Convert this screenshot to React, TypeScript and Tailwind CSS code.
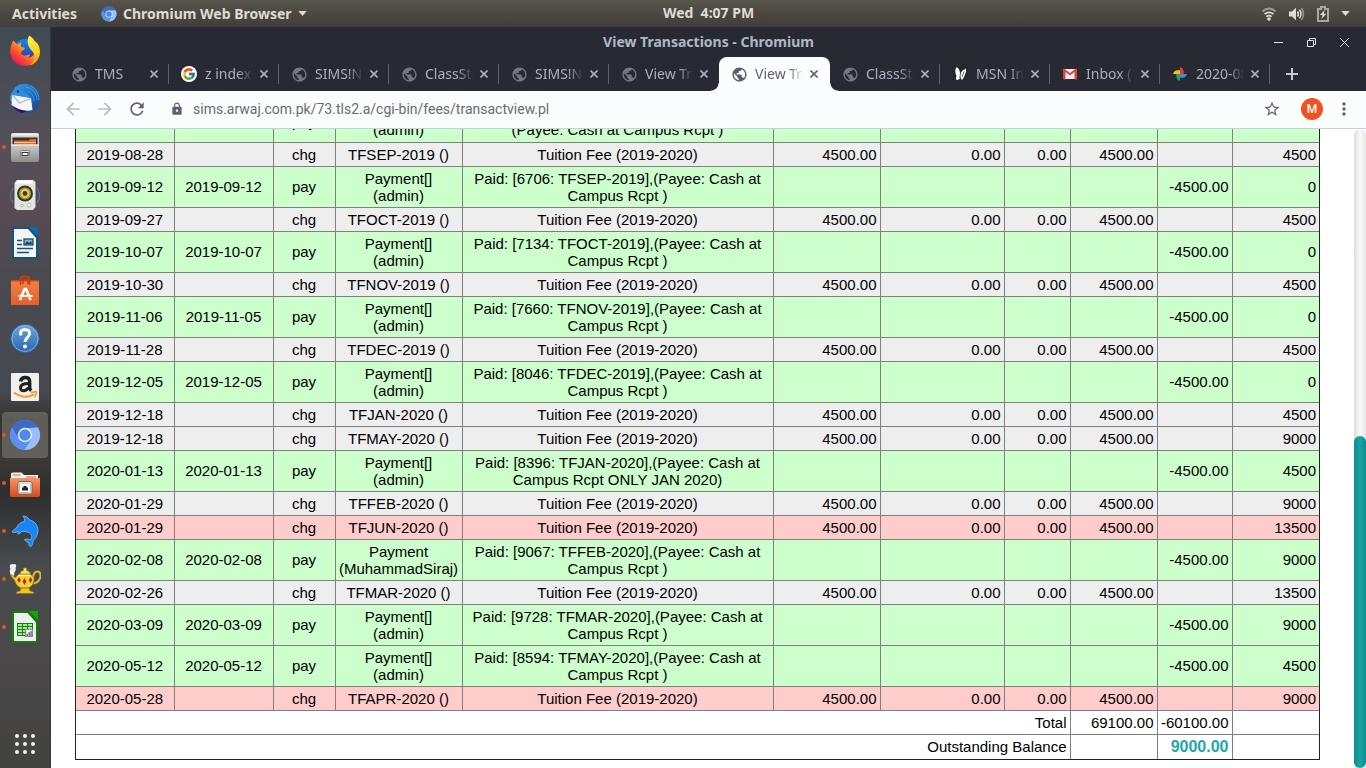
import type { ReactNode } from 'react'
import { FcGoogle } from 'react-icons/fc'
import {
  MdArrowBack,
  MdArrowForward,
  MdLock,
  MdMoreVert,
  MdPublic,
  MdRefresh,
  MdStarBorder,
} from 'react-icons/md'

/* ---------- Dock icons ---------- */

function FirefoxIcon() {
  return (
    <svg viewBox="0 0 32 32" className="size-8">
      <defs>
        <linearGradient id="ff-body" x1="0.9" y1="0.1" x2="0.2" y2="0.9">
          <stop offset="0" stopColor="#ffe226" />
          <stop offset="0.4" stopColor="#ff9a1c" />
          <stop offset="0.7" stopColor="#ff4a36" />
          <stop offset="1" stopColor="#e8145c" />
        </linearGradient>
        <linearGradient id="ff-globe" x1="0.5" y1="0" x2="0.5" y2="1">
          <stop offset="0" stopColor="#0a8cf5" />
          <stop offset="1" stopColor="#3a2a9a" />
        </linearGradient>
        <linearGradient id="ff-tail" x1="0.3" y1="0" x2="0.5" y2="1">
          <stop offset="0" stopColor="#fff04a" />
          <stop offset="0.6" stopColor="#ffd21c" />
          <stop offset="1" stopColor="#ff8a16" />
        </linearGradient>
      </defs>
      <circle cx="16" cy="16" r="12" fill="url(#ff-globe)" />
      <path d="M4.500 5.500 8 9.500c2-1.500 4-2 5-1.800-1.500 1.500-1.500 3-.5 4.300 2 .3 3.500.5 3.300 1.500-.4 1.500-3 2-3.600 3.500-.5 2 1.500 3.800 4 3.500 2-.3 3-1.500 4.800-1 .6.800-1 2.800-3 3.300 5 .5 9-4 8.500-9 1.500 1.500 2 3.700 2 5C30 26 23.500 31 16.200 31 8 31 1.200 25 1.200 16.500 1.200 11.500 2.800 7.500 4.500 5.500Z" fill="url(#ff-body)" />
      <path d="M20 .5c3.500 2 5 4 5.800 5.800C29.500 8.500 31 13 31 17c0 7-5 12-10 13.400 3.300-2.600 5.500-6.400 4.500-10.400-1-3.800-4.500-5.500-6-9C18 7.500 18.500 3.500 20 .5Z" fill="url(#ff-tail)" />
    </svg>
  )
}

function ThunderbirdIcon() {
  return (
    <svg viewBox="0 0 32 32" className="size-8">
      <defs>
        <linearGradient id="tb-body" x1="0" y1="0" x2="1" y2="1">
          <stop offset="0" stopColor="#3fa2e8" />
          <stop offset="0.5" stopColor="#2470c4" />
          <stop offset="1" stopColor="#18408c" />
        </linearGradient>
      </defs>
      <path d="M8 3c5-3.500 13-3 18 1.500 6 5.500 6.500 15 2 20.500-3 4-8 5.500-12 5C7 29.500 1 24 1 16 1 12 2.500 9 5 7c.3-2 1.500-3 3-4Z" fill="url(#tb-body)" />
      <path d="M17 4c6 1 11 6 11 13M19 8c4 2 6 6 6 10M22 3c5 3 8 8 8 14" fill="none" stroke="#5cb3ee" strokeWidth="1" opacity=".6" />
      <path d="M1.500 18c1 6 6 11 12 12l9-4-10 1Z" fill="#27195c" />
      <path d="M3 11.500 22 15l1.500 12c-6 1.500-14 .5-21-5Z" fill="#f3f5f8" />
      <path d="m3.500 12 7 8L22 15.500" fill="none" stroke="#b3bcc8" strokeWidth="1.200" />
      <path d="M5 8c3-3 7-2 10 1 3 2 6 3 7 6L3 12Z" fill="#348ddc" />
      <circle cx="9" cy="8.500" r="1.200" fill="#16396e" />
    </svg>
  )
}

function FilesIcon() {
  return (
    <svg viewBox="0 0 32 32" className="size-8">
      <defs>
        <linearGradient id="cab" x1="0" y1="0" x2="0" y2="1">
          <stop offset="0" stopColor="#d6d5d3" />
          <stop offset="0.5" stopColor="#c3c2c0" />
          <stop offset="1" stopColor="#8e8d8b" />
        </linearGradient>
      </defs>
      <rect x="2" y="2" width="28" height="29" rx="2" fill="url(#cab)" />
      <path d="M2.500 4.500c0-1.500.6-2 2-2h23c1.400 0 2 .5 2 2Z" fill="#efeeed" />
      <rect x="3.500" y="6.500" width="25" height="7.500" fill="#33302e" />
      <path d="M5 9.500h15l1-1.500h6v6H5Z" fill="#e8692c" />
      <path d="M5 11.500h22" stroke="#ffc79c" />
      <path d="M2 14h28" stroke="#efefee" strokeWidth="1.400" />
      <rect x="11.500" y="19.500" width="9" height="6.500" rx="1" fill="#dedddc" stroke="#858483" />
      <rect x="13" y="21.500" width="6" height="3" fill="#fff" stroke="#333" />
    </svg>
  )
}

function RhythmboxIcon() {
  return (
    <svg viewBox="0 0 32 32" className="size-8">
      <path d="M4 9q-5 8 0 15M28 9q5 8 0 15" fill="none" stroke="#5c87bd" strokeWidth="1.300" opacity=".6" />
      <path d="M8 1h16l2.500 2V28L24 31H8l-2.500-2V4Z" fill="#e4e4e1" />
      <path d="M8 1.500h16v3H6Z" fill="#fff" />
      <circle cx="16" cy="14.500" r="8" fill="#343432" />
      <circle cx="16" cy="14.500" r="6" fill="#ad9920" />
      <circle cx="16" cy="14.500" r="4.500" fill="#dfcc50" />
      <circle cx="16" cy="14.500" r="2.400" fill="#41413a" />
      <circle cx="13" cy="26.500" r="1.300" fill="#fff" stroke="#b2b2ae" />
      <circle cx="20" cy="26" r="2" fill="#fff" stroke="#b2b2ae" />
    </svg>
  )
}

function WriterIcon() {
  return (
    <svg viewBox="0 0 32 32" className="size-8">
      <path d="M3 0h17l9 9v23H3Z" fill="#0f5686" />
      <path d="M5 2h14l8 9v19H5Z" fill="#f4f5f5" />
      <path d="M20 0h9v9Z" fill="#0d6ca8" />
      <path d="M8 13.500h5M8 17.500h5M8 21.500h16M8 25.500h12" stroke="#0f5686" strokeWidth="1.700" />
      <rect x="15" y="12" width="9" height="6" fill="#7fb9df" stroke="#103b58" strokeWidth="1.200" />
      <path d="m16 17 2-3 2 2 2-2 1 3Z" fill="#263f4c" />
    </svg>
  )
}

function SoftwareIcon() {
  return (
    <svg viewBox="0 0 32 32" className="size-8">
      <defs>
        <linearGradient id="bag" x1="0" y1="0" x2="0" y2="1">
          <stop offset="0" stopColor="#f08145" />
          <stop offset="1" stopColor="#e5602a" />
        </linearGradient>
      </defs>
      <path d="M2 5h28v3H2Z" fill="#c54a1a" />
      <path d="M2 6.500h28V30H2Z" fill="url(#bag)" />
      <path d="M11.500 10V4q0-2.500 2.500-2.500h4q2.500 0 2.500 2.500v6M14 9V4h5v5" fill="none" stroke="#c93c16" strokeWidth="1.600" />
      <path d="m11 25 4.500-11h1.500l4.500 11" fill="none" stroke="#fff" strokeWidth="2.600" />
      <path d="M9.500 21h14" stroke="#fff" strokeWidth="2.200" />
      <path d="M9.500 22.300h14" stroke="#e86931" strokeWidth=".6" />
    </svg>
  )
}

function HelpIcon() {
  return (
    <svg viewBox="0 0 32 32" className="size-8">
      <defs>
        <linearGradient id="help" x1="0" y1="0" x2="0" y2="1">
          <stop offset="0" stopColor="#6fa5dc" />
          <stop offset="1" stopColor="#2c67ad" />
        </linearGradient>
      </defs>
      <circle cx="16" cy="15.500" r="14.200" fill="url(#help)" stroke="#2b609f" />
      <circle cx="16" cy="15.500" r="13" fill="none" stroke="#8bb9e5" strokeWidth=".8" />
      <path d="M11.500 11.500Q11 7 15.500 6.500q5.500 0 5 4.500c-.3 3.500-4.500 4-4.500 8" fill="none" stroke="#fff" strokeWidth="2.900" />
      <circle cx="11.800" cy="11" r="1.700" fill="#fff" />
      <circle cx="16" cy="23.500" r="2" fill="#fff" />
    </svg>
  )
}

function AmazonIcon() {
  return (
    <svg viewBox="0 0 32 32" className="size-8">
      <rect x="2" y="2" width="28" height="28" rx="1" fill="#f0f0ef" />
      <path d="M11.500 10.500q.7-4 4.800-4 4.400 0 4.400 4v6q0 2 1.500 3.300" fill="none" stroke="#222" strokeWidth="3.400" />
      <path d="M19.500 12.500c-5 0-8 .8-8 4.300 0 4 5.600 4 8-.2" fill="none" stroke="#222" strokeWidth="3" />
      <path d="M5 21.500q10 7.500 20 1.800" fill="none" stroke="#f79a20" strokeWidth="2" />
      <path d="m22 21.500 5.500-.8q.5 2.500-2 5.300" fill="none" stroke="#f79a20" strokeWidth="1.500" />
    </svg>
  )
}

function ChromiumIcon({ className }: { className: string }) {
  return (
    <svg viewBox="0 0 32 32" className={className}>
      <circle cx="16" cy="16" r="15" fill="#5a8de8" />
      <path d="M3 8.500A15 15 0 0 1 29 8.500L16 9.500 9.500 19Z" fill="#3d6bc4" />
      <path d="M29 8.500A15 15 0 0 1 15.500 31L22.500 19.500 16 9.300Z" fill="#9dbef8" />
      <path d="M3 8.500A15 15 0 0 0 15.500 31L22 20 10 19.500Z" fill="#5b90ec" />
      <circle cx="16" cy="16" r="7.200" fill="#e8f0ff" />
      <circle cx="16" cy="16" r="5.700" fill="#5088ee" />
    </svg>
  )
}

function NetworkFolderIcon() {
  return (
    <svg viewBox="0 0 32 32" className="size-8">
      <defs>
        <linearGradient id="folder" x1="0" y1="0" x2="0" y2="1">
          <stop offset="0" stopColor="#f4956d" />
          <stop offset="1" stopColor="#d64b1b" />
        </linearGradient>
      </defs>
      <path d="M2 7q0-1.500 1.500-1.500h9L15 8h14v5H2Z" fill="#f5f4f3" />
      <path d="M3.500 8h8M17 10h10" stroke="#e88a64" strokeWidth="1.400" />
      <path d="M1 11h30v17q0 2-2 2H3q-2 0-2-2Z" fill="url(#folder)" />
      <rect x="9" y="14.500" width="14" height="12.500" rx="2" fill="#f6f6f5" stroke="#806559" />
      <rect x="10.500" y="16" width="11" height="9.500" rx="1" fill="none" stroke="#aaa" strokeWidth=".7" />
      <path d="M13 23.500v-3h1.500V19h3v1.500H19v3Z" fill="#222" />
    </svg>
  )
}

function DolphinIcon() {
  return (
    <svg viewBox="0 0 32 32" className="size-8">
      <path d="M3 17c1-2 3-3 4.500-4 1.500-4 4.500-6 8-6.500C16 4 15 2 13.800 1c3-.2 5.500 1.500 7 4 6.500 1.500 9.500 8 7.500 14.500-1 3-2.800 5-4.300 6 .3 2-.5 4.500-2.500 6.500-1.500-1-1.800-2.500-1.500-4-1.500-1-3.800-1.500-4.500-3.500 2-.8 4.300 0 6 .3 2-2.400 1.500-5.300-1-6.800-2.500-1.400-5-1.600-8-1.500-.8 1.500-2 2.500-3.500 2.500.2-1.200.3-2 .2-2.700C7 17.800 5 18 3 17Z" fill="#1684fb" stroke="#9ac5ef" strokeWidth=".7" />
    </svg>
  )
}

function TeapotIcon() {
  return (
    <svg viewBox="0 0 32 32" className="size-8">
      <path d="M3 14C1 11 0 8 1.500 6-.5 3 2 0 4 1.500 7 0 8 3 6.500 5 8 8 4 9 5.500 12Z" fill="#f0f0f0" />
      <path d="M24 14q1-6 5-5.500 3.500 1 2.300 6-1.500 5-6.500 6" fill="none" stroke="#e2bc22" strokeWidth="2" />
      <path d="M1.500 11.500Q4 11.500 6 15l4-4h11l4 4q.5 7.500-6 10H12Q7 23 5.500 17Q3 15 1.500 11.500Z" fill="#f3d32f" stroke="#a8830f" strokeWidth=".8" />
      <path d="M11 11q0-3 3.500-3.500V5h3v2.500Q21 8 21.500 11Z" fill="#f9e45c" stroke="#ab860e" strokeWidth=".7" />
      <path d="M12 25h8l1 3q4 0 4 2.500H7Q7 28 11 28Z" fill="#e9c525" stroke="#987409" strokeWidth=".8" />
      <path d="m10 14 1.800 3-1.800 3-1.800-3ZM15.500 15l2 3.500-2 3.500-2-3.500ZM21.500 14l1.800 3-1.800 3-1.800-3Z" fill="#c7203a" />
      <path d="M9 12.500h13" stroke="#fff6a1" />
    </svg>
  )
}

function CalcIcon() {
  return (
    <svg viewBox="0 0 32 32" className="size-8">
      <path d="M3 0h17l9 9v23H3Z" fill="#117d0a" />
      <path d="M5 2h13.500l8.500 9.500V30H5Z" fill="#eeeeed" />
      <path d="M20 0h9v9Z" fill="#17a30d" />
      <rect x="8" y="12" width="16" height="13" fill="#11850b" />
      <path d="M9 14h4M14 14h4M19 14h4M9 17h4M14 17h4M19 17h4M9 20h4M14 20h4M9 23h4M14 23h2" stroke="#a9e5a0" strokeWidth="2" />
      <rect x="16.500" y="18.500" width="7" height="7" fill="#fff" stroke="#888" />
      <path d="M18.300 25v-2.500" stroke="#2a80cb" strokeWidth="1.500" />
      <path d="M20.200 25v-4" stroke="#e85c24" strokeWidth="1.500" />
      <path d="M22 25v-5" stroke="#2a80cb" strokeWidth="1.500" />
    </svg>
  )
}

const dockItems: { name: string; icon: ReactNode; running?: boolean; active?: boolean }[] = [
  { name: 'Firefox', icon: <FirefoxIcon /> },
  { name: 'Thunderbird', icon: <ThunderbirdIcon /> },
  { name: 'Files', icon: <FilesIcon />, running: true },
  { name: 'Rhythmbox', icon: <RhythmboxIcon /> },
  { name: 'LibreOffice Writer', icon: <WriterIcon /> },
  { name: 'Software', icon: <SoftwareIcon /> },
  { name: 'Help', icon: <HelpIcon /> },
  { name: 'Amazon', icon: <AmazonIcon /> },
  { name: 'Chromium', icon: <ChromiumIcon className="size-8" />, running: true, active: true },
  { name: 'Network folder', icon: <NetworkFolderIcon />, running: true },
  { name: 'Dolphin', icon: <DolphinIcon />, running: true },
  { name: 'Teapot', icon: <TeapotIcon />, running: true },
  { name: 'LibreOffice Calc', icon: <CalcIcon />, running: true },
]

function Dock() {
  return (
    <nav
      aria-label="Dock"
      className="flex w-[51px] shrink-0 flex-col border-r border-[#383838] bg-[linear-gradient(to_bottom,#3f4b51_0%,#4d4d57_9%,#55505a_16%,#574a53_26%,#4a4a50_34%,#454a50_49%,#35342f_53%,#3b3835_58%,#302e2e_63%,#3b3e41_68%,#484b4f_73%,#4a4849_85%,#424240_100%)]"
    >
      {dockItems.map((item) => (
        <button
          key={item.name}
          aria-label={item.name}
          className="relative flex h-12 items-center justify-center"
        >
          <span
            className={
              item.active
                ? 'flex size-[46px] items-center justify-center rounded-sm bg-white/20'
                : 'flex size-[46px] items-center justify-center'
            }
          >
            {item.icon}
          </span>
          {item.running && <span className="absolute left-0.5 size-1 rounded-full bg-[#e95420]" />}
        </button>
      ))}
      <button aria-label="Show applications" className="mt-auto flex h-12 items-center justify-center">
        <svg viewBox="0 0 20 20" className="size-5" fill="#f2f2f2">
          {[2, 10, 18].map((y) => [2, 10, 18].map((x) => <circle key={`${x}-${y}`} cx={x} cy={y} r="2" />))}
        </svg>
      </button>
    </nav>
  )
}

/* ---------- Desktop top bar ---------- */

function Caret() {
  return (
    <svg viewBox="0 0 10 6" className="h-[5px] w-[9px]" fill="#dfdbd2">
      <path d="M0 0h10L5 6Z" />
    </svg>
  )
}

function TopBar() {
  return (
    <header className="grid h-[27px] shrink-0 grid-cols-[51px_1fr_auto_1fr] items-center bg-linear-to-b from-[#57544b] to-[#403e38] text-sm font-bold text-[#dfdbd2]">
      <div className="col-span-2 flex items-center pl-3">
        <button>Activities</button>
        <button className="ml-6 flex items-center gap-1.5">
          <ChromiumIcon className="size-4" />
          <span>Chromium Web Browser</span>
          <Caret />
        </button>
      </div>
      <button className="pb-px whitespace-pre">Wed  4:07 PM</button>
      <button aria-label="System menu" className="flex items-center gap-3 justify-self-end pr-4">
        <svg viewBox="0 0 16 14" className="h-3.5 w-4" fill="none" stroke="#dfdbd2">
          <path d="M1.500 4.500q6.500-6 13 0" strokeWidth="2" opacity=".55" />
          <path d="M3.500 7.200q4.500-3.800 9 0M5.300 9.700q2.700-2.200 5.400 0" strokeWidth="1.700" />
          <circle cx="8" cy="12" r="1.800" fill="#dfdbd2" stroke="none" />
        </svg>
        <svg viewBox="0 0 16 14" className="h-3.5 w-4" fill="none" stroke="#dfdbd2">
          <path d="M0 4.500h3L7 .8v12.400L3 9.500H0Z" fill="#dfdbd2" stroke="none" />
          <path d="M8.500 4.500q1.800 2.500 0 5M10.500 2.800q3 4.200 0 8.400" strokeWidth="1.500" />
          <path d="M12.500 1q4 6 0 12" strokeWidth="1.500" opacity=".5" />
        </svg>
        <svg viewBox="0 0 12 16" className="h-4 w-3" fill="none">
          <path d="M1 3h3V1h4v2h3v12H1Z" stroke="#aaa79f" strokeWidth="2" />
          <path d="M7.500 4 3 9h2.500L4.500 13 9.300 7.800H6.800Z" fill="#dfdbd2" />
        </svg>
        <Caret />
      </button>
    </header>
  )
}

/* ---------- Browser chrome ---------- */

function GmailIcon() {
  return (
    <svg viewBox="0 0 16 16" className="size-4">
      <path d="M2 3h12v10H2Z" fill="#efefef" />
      <path d="M1 3.500v9.500q0 .5.500.5H3.500V6L8 9.600 12.500 6v7.500h2q.5 0 .5-.5V3.500q0-1-1-1L8 7 2 2.500q-1 0-1 1Z" fill="#d8453a" />
    </svg>
  )
}

function PhotosIcon() {
  return (
    <svg viewBox="0 0 16 16" className="size-4">
      <path d="M8 1q3.500 1 3.700 4.500V8H8Z" fill="#dc4437" />
      <path d="M15 8q-1 3.500-4.500 3.700H8V8Z" fill="#4285f4" />
      <path d="M8 15q-3.500-1-3.700-4.500V8H8Z" fill="#2c9e58" />
      <path d="M1 8q1-3.500 4.500-3.700H8V8Z" fill="#f9bb16" />
    </svg>
  )
}

function MsnIcon() {
  return (
    <svg viewBox="0 0 16 16" className="size-4">
      <rect width="16" height="16" fill="#25272b" />
      <path d="M4 1.500q3-.5 3.800 4.500l.5 2Q10 4 14 2.500q.5 4-1.500 7.500-1.500 3.500-3 4l-.7-3q-1.300 3.500-4.300 3-1.500-1.500 0-4Q2.500 6 4 1.500Z" fill="#fff" />
      <path d="m8.600 7-.8 5M12 5.500 10 11" stroke="#25272b" strokeWidth=".7" />
    </svg>
  )
}

const globe = <MdPublic className="size-[17px] shrink-0 text-[#747883]" />

const tabs: { title: string; icon: ReactNode; active?: boolean; noRule?: boolean }[] = [
  { title: 'TMS', icon: globe },
  {
    title: 'z index css',
    icon: (
      <span className="flex size-4 items-center justify-center rounded-full bg-white">
        <FcGoogle className="size-3.5" />
      </span>
    ),
  },
  { title: 'SIMS!Net', icon: globe },
  { title: 'ClassStudents', icon: globe },
  { title: 'SIMS!Net', icon: globe },
  { title: 'View Transactions', icon: globe, noRule: true },
  {
    title: 'View Transactions',
    icon: <MdPublic className="size-[17px] shrink-0 text-[#5a5f6d]" />,
    active: true,
  },
  { title: 'ClassStudents', icon: globe },
  { title: 'MSN India', icon: <MsnIcon /> },
  { title: 'Inbox (12)', icon: <GmailIcon /> },
  { title: '2020-08-01', icon: <PhotosIcon /> },
]

function Cross({ className }: { className: string }) {
  return (
    <svg viewBox="0 0 8 8" className={className} fill="none" stroke="currentColor">
      <path d="m.5.5 7 7m0-7-7 7" strokeWidth="1.600" />
    </svg>
  )
}

function TabStrip() {
  return (
    <div role="tablist" className="flex h-[34px] pl-2 text-sm">
      {tabs.map((tab, i) => (
        <div
          key={i}
          className={
            tab.active
              ? 'relative flex w-[111px] items-center rounded-t-lg bg-[#fbfcfe] pr-2 pl-3 text-[#5d6270] before:absolute before:bottom-0 before:-left-2 before:size-2 before:bg-[radial-gradient(circle_at_0_0,transparent_7px,#fbfcfe_8px)] after:absolute after:-right-2 after:bottom-0 after:size-2 after:bg-[radial-gradient(circle_at_100%_0,transparent_7px,#fbfcfe_8px)]'
              : 'flex w-[110px] items-center pl-3 text-[#a9b0bf]'
          }
        >
          <button
            role="tab"
            aria-selected={!!tab.active}
            className="flex min-w-0 flex-1 items-center gap-2 text-left"
          >
            <span className="flex w-4 shrink-0 justify-center">{tab.icon}</span>
            <span className="flex-1 overflow-hidden mask-r-from-65% mask-r-to-95% whitespace-nowrap">
              {tab.title}
            </span>
          </button>
          <button aria-label="Close tab" className={tab.active ? 'px-1' : 'pr-2.5 pl-1'}>
            <Cross className="size-2" />
          </button>
          {!tab.active && <span className={tab.noRule ? 'h-5 w-px' : 'h-5 w-px bg-[#5d616d]'} />}
        </div>
      ))}
      <button aria-label="New tab" className="flex w-11 items-center justify-center text-[#c5cad6]">
        <svg viewBox="0 0 12 12" className="size-3" stroke="currentColor" strokeWidth="2">
          <path d="M6 0v12M0 6h12" />
        </svg>
      </button>
    </div>
  )
}

function BrowserChrome() {
  return (
    <div className="relative shrink-0 bg-[#282a33]">
      <div className="grid h-[30px] grid-cols-[1fr_auto_1fr] items-center text-[#afb8c6]">
        <h1 className="col-start-2 text-sm font-bold">View Transactions - Chromium</h1>
        <div className="flex items-center gap-6 justify-self-end pr-[17px] text-[#e0e3ea]">
          <button aria-label="Minimize">
            <svg viewBox="0 0 9 9" className="size-[9px]" stroke="currentColor">
              <path d="M0 4.500h9" />
            </svg>
          </button>
          <button aria-label="Restore">
            <svg viewBox="0 0 9 9" className="size-[9px]" fill="none" stroke="currentColor">
              <path d="M.5 2.500h6v6h-6ZM2.500 2.500v-2h6v6h-2" />
            </svg>
          </button>
          <button aria-label="Close window">
            <svg viewBox="0 0 9 9" className="size-[9px]" stroke="currentColor">
              <path d="m0 0 9 9m0-9L0 9" />
            </svg>
          </button>
        </div>
      </div>
      <TabStrip />
      <div className="flex h-[38px] items-center border-b border-[#c6d0de] bg-[#fbfcfe] px-3 pb-0.5 text-[#5d6270]">
        <div className="flex gap-3">
          <button aria-label="Back" className="text-[#b9bcc4]">
            <MdArrowBack className="size-5" />
          </button>
          <button aria-label="Forward" className="text-[#b9bcc4]">
            <MdArrowForward className="size-5" />
          </button>
          <button aria-label="Reload">
            <MdRefresh className="size-5" />
          </button>
        </div>
        <label className="ml-[23px] flex flex-1 items-center gap-[9px]">
          <MdLock className="size-3.5" />
          <span className="sr-only">Address</span>
          <input
            className="flex-1 font-[Roboto] text-sm text-[#6b6c70] outline-none"
            defaultValue="sims.arwaj.com.pk/73.tls2.a/cgi-bin/fees/transactview.pl"
          />
        </label>
        <button aria-label="Bookmark">
          <MdStarBorder className="size-[18px]" />
        </button>
        <button
          aria-label="Profile"
          className="ml-5 flex size-[22px] items-center justify-center rounded-full bg-[#f4511e] font-[Roboto] text-xs font-medium text-white"
        >
          M
        </button>
        <button aria-label="Menu" className="ml-[11px]">
          <MdMoreVert className="size-5" />
        </button>
      </div>
    </div>
  )
}

/* ---------- Transactions ---------- */

type Charge = { kind: 'chg'; date: string; month: string; balance: string; due?: boolean }
type Payment = {
  kind: 'pay'
  date: string
  paidOn: string
  title: string
  user: string
  detail: ReactNode
  balance: string
}

const rows: (Charge | Payment)[] = [
  {
    kind: 'pay',
    date: '2019-08-20',
    paidOn: '2019-08-20',
    title: 'Payment[]',
    user: '(admin)',
    detail: (
      <>
        Paid: [6335: TFAUG-2019],
        <br />
        (Payee: Cash at Campus Rcpt )
      </>
    ),
    balance: '0',
  },
  { kind: 'chg', date: '2019-08-28', month: 'TFSEP-2019', balance: '4500' },
  { kind: 'pay', date: '2019-09-12', paidOn: '2019-09-12', title: 'Payment[]', user: '(admin)', detail: 'Paid: [6706: TFSEP-2019],(Payee: Cash at Campus Rcpt )', balance: '0' },
  { kind: 'chg', date: '2019-09-27', month: 'TFOCT-2019', balance: '4500' },
  { kind: 'pay', date: '2019-10-07', paidOn: '2019-10-07', title: 'Payment[]', user: '(admin)', detail: 'Paid: [7134: TFOCT-2019],(Payee: Cash at Campus Rcpt )', balance: '0' },
  { kind: 'chg', date: '2019-10-30', month: 'TFNOV-2019', balance: '4500' },
  { kind: 'pay', date: '2019-11-06', paidOn: '2019-11-05', title: 'Payment[]', user: '(admin)', detail: 'Paid: [7660: TFNOV-2019],(Payee: Cash at Campus Rcpt )', balance: '0' },
  { kind: 'chg', date: '2019-11-28', month: 'TFDEC-2019', balance: '4500' },
  { kind: 'pay', date: '2019-12-05', paidOn: '2019-12-05', title: 'Payment[]', user: '(admin)', detail: 'Paid: [8046: TFDEC-2019],(Payee: Cash at Campus Rcpt )', balance: '0' },
  { kind: 'chg', date: '2019-12-18', month: 'TFJAN-2020', balance: '4500' },
  { kind: 'chg', date: '2019-12-18', month: 'TFMAY-2020', balance: '9000' },
  { kind: 'pay', date: '2020-01-13', paidOn: '2020-01-13', title: 'Payment[]', user: '(admin)', detail: 'Paid: [8396: TFJAN-2020],(Payee: Cash at Campus Rcpt ONLY JAN 2020)', balance: '4500' },
  { kind: 'chg', date: '2020-01-29', month: 'TFFEB-2020', balance: '9000' },
  { kind: 'chg', date: '2020-01-29', month: 'TFJUN-2020', balance: '13500', due: true },
  { kind: 'pay', date: '2020-02-08', paidOn: '2020-02-08', title: 'Payment', user: '(MuhammadSiraj)', detail: 'Paid: [9067: TFFEB-2020],(Payee: Cash at Campus Rcpt )', balance: '9000' },
  { kind: 'chg', date: '2020-02-26', month: 'TFMAR-2020', balance: '13500' },
  { kind: 'pay', date: '2020-03-09', paidOn: '2020-03-09', title: 'Payment[]', user: '(admin)', detail: 'Paid: [9728: TFMAR-2020],(Payee: Cash at Campus Rcpt )', balance: '9000' },
  { kind: 'pay', date: '2020-05-12', paidOn: '2020-05-12', title: 'Payment[]', user: '(admin)', detail: 'Paid: [8594: TFMAY-2020],(Payee: Cash at Campus Rcpt )', balance: '4500' },
  { kind: 'chg', date: '2020-05-28', month: 'TFAPR-2020', balance: '9000', due: true },
]

function Cell({ children, right, span }: { children?: ReactNode; right?: boolean; span?: number }) {
  return (
    <td
      colSpan={span}
      className={
        right
          ? 'border border-[#808080] p-[3px] text-right'
          : 'border border-[#808080] p-[3px] text-center'
      }
    >
      {children}
    </td>
  )
}

function TransactionRow({ row }: { row: Charge | Payment }) {
  if (row.kind === 'pay') {
    return (
      <tr className="h-[41px] bg-[#ccffcc]">
        <Cell>{row.date}</Cell>
        <Cell>{row.paidOn}</Cell>
        <Cell>pay</Cell>
        <Cell>
          {row.title}
          <br />
          {row.user}
        </Cell>
        <Cell>{row.detail}</Cell>
        <Cell right />
        <Cell right />
        <Cell right />
        <Cell right />
        <Cell right>-4500.00</Cell>
        <Cell right>{row.balance}</Cell>
      </tr>
    )
  }
  return (
    <tr className={row.due ? 'h-6 bg-[#ffcccc]' : 'h-6 bg-[#eeeeee]'}>
      <Cell>{row.date}</Cell>
      <Cell />
      <Cell>chg</Cell>
      <Cell>{row.month} ()</Cell>
      <Cell>Tuition Fee (2019-2020)</Cell>
      <Cell right>4500.00</Cell>
      <Cell right>0.00</Cell>
      <Cell right>0.00</Cell>
      <Cell right>4500.00</Cell>
      <Cell />
      <Cell right>{row.balance}</Cell>
    </tr>
  )
}

function Transactions() {
  return (
    <div className="border border-[#222]">
      <table className="w-full table-fixed border-collapse border-hidden font-['Liberation_Sans',Arial,sans-serif] text-[15px] leading-[17px] text-black">
        <colgroup>
          <col className="w-[98px]" />
          <col className="w-[99px]" />
          <col className="w-[62px]" />
          <col className="w-[127px]" />
          <col />
          <col className="w-[107px]" />
          <col className="w-[124px]" />
          <col className="w-[66px]" />
          <col className="w-[87px]" />
          <col className="w-[75px]" />
          <col className="w-[87px]" />
        </colgroup>
        <tbody>
          {rows.map((row, i) => (
            <TransactionRow key={i} row={row} />
          ))}
        </tbody>
        <tfoot>
          <tr className="h-6">
            <Cell right span={8}>
              Total
            </Cell>
            <Cell right>69100.00</Cell>
            <Cell right>-60100.00</Cell>
            <Cell right />
          </tr>
          <tr className="h-[25px]">
            <Cell right span={8}>
              Outstanding Balance
            </Cell>
            <Cell right />
            <Cell right>
              <b className="text-base leading-[17px] text-[#20a8a8]">9000.00</b>
            </Cell>
            <Cell right />
          </tr>
        </tfoot>
      </table>
    </div>
  )
}

export default function App() {
  return (
    <div className="flex h-screen flex-col overflow-hidden bg-white font-['Noto_Sans',sans-serif]">
      <TopBar />
      <div className="flex min-h-0 flex-1">
        <Dock />
        <div className="flex min-w-0 flex-1 flex-col">
          <BrowserChrome />
          <div className="flex min-h-0 flex-1">
            <main className="flex min-w-0 flex-1 flex-col justify-end overflow-hidden pr-[34px] pb-2 pl-6">
              <Transactions />
            </main>
            <div className="flex w-3 shrink-0 flex-col justify-end rounded-md bg-linear-to-r from-[#dcdcdc] via-[#fafafa] to-[#e6e6e6]">
              <div className="h-[52%] rounded-md bg-linear-to-r from-[#0f8b8b] via-[#18a5a5] to-[#0f8b8b]" />
            </div>
          </div>
        </div>
      </div>
    </div>
  )
}
